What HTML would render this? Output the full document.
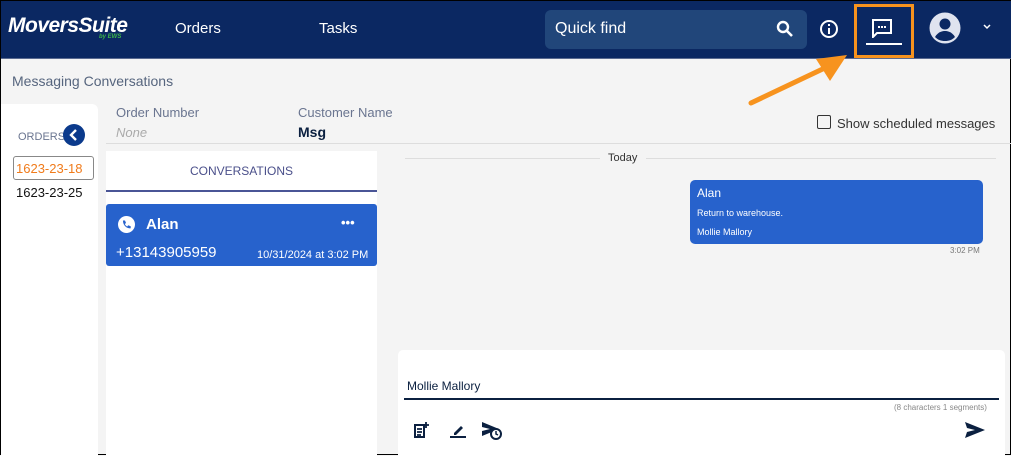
<!DOCTYPE html>
<html><head><style>
*{box-sizing:border-box;margin:0;padding:0}
body{width:1011px;height:455px;overflow:hidden;background:#f4f4f4;font-family:"Liberation Sans",sans-serif;position:relative;border:1px solid #000}
.a{position:absolute}
.hdr{left:0;top:0;width:1011px;height:58px;background:#0b2862;border-bottom:1px solid #5a6a90}
</style></head><body>
<div class="a hdr"></div>
<div class="a" style="left:7px;top:13px;color:#fff;font-size:21px;font-weight:bold;font-style:italic;letter-spacing:-0.5px">MoversSuite</div>
<div class="a" style="left:98px;top:33px;color:#3cb64a;font-size:6px;font-weight:bold;font-style:italic">by EWS</div>
<div class="a" style="left:174px;top:19px;color:#fff;font-size:15px">Orders</div>
<div class="a" style="left:318px;top:19px;color:#fff;font-size:15px">Tasks</div>
<div class="a" style="left:544px;top:9px;width:262px;height:39px;background:#21467a;border-radius:6px"></div>
<div class="a" style="left:554px;top:19px;color:#fff;font-size:16px">Quick find</div>
<svg class="a" style="left:775px;top:19px" width="18" height="18" viewBox="0 0 18 18"><circle cx="7" cy="7" r="5" fill="none" stroke="#fff" stroke-width="2.4"/><path d="M11 11l5 5" stroke="#fff" stroke-width="2.6"/></svg>
<svg class="a" style="left:818px;top:18px" width="20" height="20" viewBox="0 0 20 20"><circle cx="10" cy="10" r="8" fill="none" stroke="#fff" stroke-width="2"/><rect x="9" y="9" width="2" height="6" fill="#fff"/><rect x="9" y="5" width="2" height="2" fill="#fff"/></svg>
<div class="a" style="left:853px;top:3px;width:60px;height:54px;border:3px solid #f7931e"></div>
<svg class="a" style="left:870px;top:17px" width="22" height="20" viewBox="0 0 22 20"><path d="M2 2h18v13H6l-4 4z" fill="none" stroke="#fff" stroke-width="2"/><rect x="7" y="8" width="2" height="2" fill="#fff"/><rect x="10" y="8" width="2" height="2" fill="#fff"/><rect x="13" y="8" width="2" height="2" fill="#fff"/></svg>
<div class="a" style="left:865px;top:42px;width:36px;height:2px;background:#fff"></div>
<svg class="a" style="left:928px;top:11px" width="32" height="32" viewBox="0 0 32 32"><circle cx="16" cy="16" r="15.5" fill="#dfe3ef"/><circle cx="16" cy="12" r="5.5" fill="#0b2862"/><path d="M6 25c3-5 7-6 10-6s7 1 10 6c-3 3-6 4-10 4s-7-1-10-4z" fill="#0b2862"/></svg>
<svg class="a" style="left:981px;top:22px" width="10" height="8" viewBox="0 0 10 8"><path d="M2 2l3 3 3-3" fill="none" stroke="#fff" stroke-width="1.5"/></svg>
<svg class="a" style="left:740px;top:50px" width="110" height="60" viewBox="0 0 110 60"><path d="M10 52L88 15" stroke="#f7931e" stroke-width="5" stroke-linecap="round"/><path d="M75 8L106 4 89 30z" fill="#f7931e"/></svg>
<div class="a" style="left:11px;top:72px;color:#56657e;font-size:14px">Messaging Conversations</div>
<div class="a" style="left:0;top:103px;width:97px;height:352px;background:#fff;border-top-right-radius:6px"></div>
<div class="a" style="left:17px;top:130px;color:#6a7590;font-size:11px">ORDERS</div>
<div class="a" style="left:62px;top:123px;width:22px;height:22px;border-radius:50%;background:#0b3a8c"></div>
<svg class="a" style="left:62px;top:123px" width="22" height="22" viewBox="0 0 22 22"><path d="M13 6l-5 5 5 5" fill="none" stroke="#fff" stroke-width="2.4"/></svg>
<div class="a" style="left:12px;top:155px;width:81px;height:24px;border:1px solid #888;border-radius:3px;color:#f07b1b;font-size:13px;padding:4px 0 0 2px">1623-23-18</div>
<div class="a" style="left:15px;top:184px;color:#111;font-size:13px">1623-23-25</div>
<div class="a" style="left:115px;top:104px;color:#6a7590;font-size:13px">Order Number</div>
<div class="a" style="left:115px;top:124px;color:#aaa;font-size:13px;font-style:italic">None</div>
<div class="a" style="left:297px;top:104px;color:#6a7590;font-size:13px">Customer Name</div>
<div class="a" style="left:297px;top:123px;color:#0b2040;font-size:14px;font-weight:bold">Msg</div>
<div class="a" style="left:105px;top:142px;width:906px;height:1px;background:#ddd"></div>
<div class="a" style="left:816px;top:114px;width:14px;height:14px;border:1.5px solid #333;border-radius:2px"></div>
<div class="a" style="left:836px;top:115px;color:#333;font-size:13px">Show scheduled messages</div>
<div class="a" style="left:105px;top:150px;width:271px;height:305px;background:#fff"></div>
<div class="a" style="left:105px;top:163px;width:271px;text-align:center;color:#4a4f8a;font-size:12px">CONVERSATIONS</div>
<div class="a" style="left:105px;top:189px;width:271px;height:2px;background:#4a5596"></div>
<div class="a" style="left:105px;top:203px;width:271px;height:62px;background:#2762cc;border-radius:3px"></div>
<svg class="a" style="left:117px;top:215px" width="17" height="17" viewBox="0 0 17 17"><circle cx="8.5" cy="8.5" r="8.5" fill="#fff"/><path d="M5 4.5l2 0 1 2.5-1.2 1c.6 1.3 1.4 2 2.4 2.5l1-1.2 2.5 1v2c-4 .5-8-3.5-7.7-7.8z" fill="#2762cc"/></svg>
<div class="a" style="left:145px;top:215px;color:#fff;font-size:15px;font-weight:bold">Alan</div>
<div class="a" style="left:340px;top:214px;color:#fff;font-size:13px;font-weight:bold">•••</div>
<div class="a" style="left:115px;top:243px;color:#fff;font-size:15px">+13143905959</div>
<div class="a" style="left:256px;top:248px;color:#fff;font-size:11px">10/31/2024 at 3:02 PM</div>
<div class="a" style="left:404px;top:157px;width:195px;height:1px;background:#ddd"></div>
<div class="a" style="left:607px;top:151px;color:#333;font-size:11px">Today</div>
<div class="a" style="left:645px;top:157px;width:350px;height:1px;background:#ddd"></div>
<div class="a" style="left:689px;top:179px;width:293px;height:64px;background:#2762cc;border-radius:5px"></div>
<div class="a" style="left:696px;top:185px;color:#fff;font-size:12px">Alan</div>
<div class="a" style="left:696px;top:207px;color:#fff;font-size:9px">Return to warehouse.</div>
<div class="a" style="left:696px;top:226px;color:#fff;font-size:9px">Mollie Mallory</div>
<div class="a" style="left:949px;top:245px;color:#777;font-size:8px">3:02 PM</div>
<div class="a" style="left:397px;top:349px;width:607px;height:106px;background:#fff;border-radius:5px 5px 0 0"></div>
<div class="a" style="left:406px;top:378px;color:#0b2040;font-size:12px">Mollie Mallory</div>
<div class="a" style="left:403px;top:397px;width:595px;height:2px;background:#0b2040"></div>
<div class="a" style="left:893px;top:402px;color:#888;font-size:8px">(8 characters 1 segments)</div>
<svg class="a" style="left:412px;top:420px" width="18" height="18" viewBox="0 0 18 18"><path d="M2 4h9v12H2z" fill="none" stroke="#0b2040" stroke-width="2"/><path d="M4 8h5M4 11h5M4 14h4M13 1v6M10 4h6" stroke="#0b2040" stroke-width="1.8"/></svg>
<svg class="a" style="left:448px;top:420px" width="18" height="18" viewBox="0 0 18 18"><path d="M5 12l7-7 2 2-7 7H5z" fill="#0b2040"/><rect x="1" y="15" width="16" height="2" fill="#0b2040"/></svg>
<svg class="a" style="left:480px;top:420px" width="22" height="20" viewBox="0 0 22 20"><path d="M1 1l17 7-17 7 0-5 8-2-8-2z" fill="#0b2040"/><circle cx="15" cy="13" r="5" fill="#fff" stroke="#0b2040" stroke-width="2"/><path d="M15 10v3l2 1" stroke="#0b2040" stroke-width="1.5" fill="none"/></svg>
<svg class="a" style="left:964px;top:421px" width="20" height="16" viewBox="0 0 20 16"><path d="M0 0l20 8-20 8 2-6 8-2-8-2z" fill="#0b2040"/></svg>
</body></html>
